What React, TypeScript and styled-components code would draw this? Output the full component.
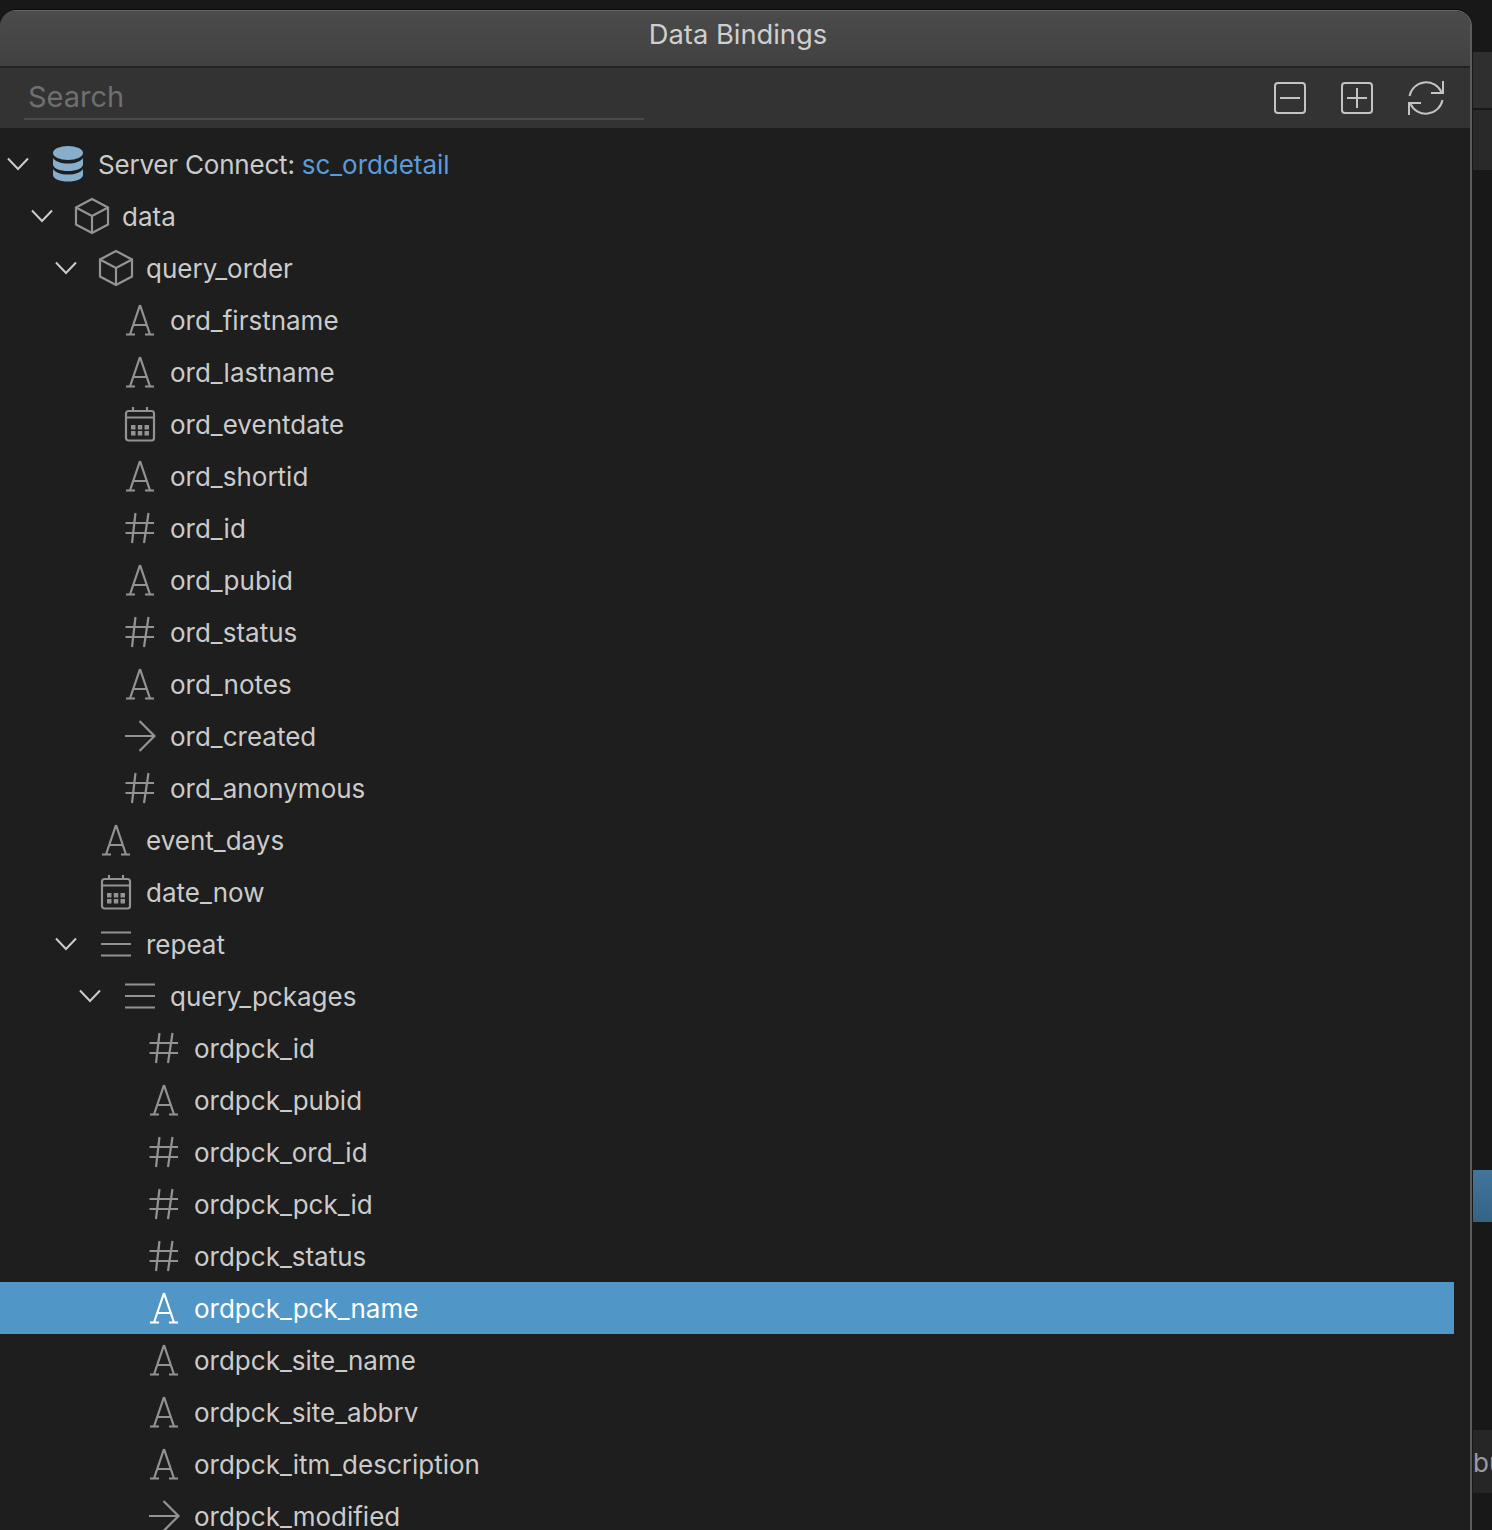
import React from 'react'
import styled, { createGlobalStyle } from 'styled-components'

type Kind = 'db' | 'box' | 'text' | 'date' | 'num' | 'arrow' | 'list'

type Row = {
  depth: number
  kind: Kind
  name: string
  open?: boolean
  link?: string
  selected?: boolean
}

const rows: Row[] = [
  { depth: 0, kind: 'db', name: 'Server Connect: ', link: 'sc_orddetail', open: true },
  { depth: 1, kind: 'box', name: 'data', open: true },
  { depth: 2, kind: 'box', name: 'query_order', open: true },
  { depth: 3, kind: 'text', name: 'ord_firstname' },
  { depth: 3, kind: 'text', name: 'ord_lastname' },
  { depth: 3, kind: 'date', name: 'ord_eventdate' },
  { depth: 3, kind: 'text', name: 'ord_shortid' },
  { depth: 3, kind: 'num', name: 'ord_id' },
  { depth: 3, kind: 'text', name: 'ord_pubid' },
  { depth: 3, kind: 'num', name: 'ord_status' },
  { depth: 3, kind: 'text', name: 'ord_notes' },
  { depth: 3, kind: 'arrow', name: 'ord_created' },
  { depth: 3, kind: 'num', name: 'ord_anonymous' },
  { depth: 2, kind: 'text', name: 'event_days' },
  { depth: 2, kind: 'date', name: 'date_now' },
  { depth: 2, kind: 'list', name: 'repeat', open: true },
  { depth: 3, kind: 'list', name: 'query_pckages', open: true },
  { depth: 4, kind: 'num', name: 'ordpck_id' },
  { depth: 4, kind: 'text', name: 'ordpck_pubid' },
  { depth: 4, kind: 'num', name: 'ordpck_ord_id' },
  { depth: 4, kind: 'num', name: 'ordpck_pck_id' },
  { depth: 4, kind: 'num', name: 'ordpck_status' },
  { depth: 4, kind: 'text', name: 'ordpck_pck_name', selected: true },
  { depth: 4, kind: 'text', name: 'ordpck_site_name' },
  { depth: 4, kind: 'text', name: 'ordpck_site_abbrv' },
  { depth: 4, kind: 'text', name: 'ordpck_itm_description' },
  { depth: 4, kind: 'arrow', name: 'ordpck_modified' },
]

const GlobalStyle = createGlobalStyle`
  html, body {
    margin: 0;
    height: 100%;
    background: #181818;
    font-family: Inter, "Liberation Sans", sans-serif;
  }
`

const Page = styled.div`
  display: flex;
  height: 100vh;
  overflow: hidden;
  background: #181818;
`

// The dialog, cut off by the bottom of the window
const Panel = styled.section`
  display: flex;
  flex-direction: column;
  flex: 0 0 1472px;
  box-sizing: border-box;
  margin-top: 10px;
  background: #1e1e1e;
  border-top: 1px solid #666;
  border-right: 2px solid #5c5c5c;
  border-top-left-radius: 16px;
  border-top-right-radius: 16px;
  box-shadow: 0 -1px 0 #0a0a0a;
  overflow: hidden;
`

const TitleBar = styled.header`
  height: 55px;
  box-sizing: content-box;
  padding: 0 0 0 6px;
  display: flex;
  align-items: flex-start;
  justify-content: center;
  flex: none;
  background: linear-gradient(#4b4b4b, #414141);
  border-bottom: 2px solid #232323;
  color: #cfcfcf;
  font-size: 27.3px;
  line-height: 48px;
`

const Toolbar = styled.div`
  height: 60px;
  flex: none;
  display: flex;
  align-items: center;
  justify-content: space-between;
  padding: 0 26px 0 24px;
  background: #333;
`

const SearchField = styled.div`
  align-self: flex-start;
  width: 620px;
  height: 42px;
  margin-top: 10px;
  padding-left: 4px;
  box-sizing: border-box;
  border-bottom: 2px solid #4a4a4a;
  color: #6f6f6f;
  font-size: 29px;
  line-height: 38px;
`

const ToolButtons = styled.div`
  display: flex;
  align-items: center;
  gap: 35px;
`

const ToolIcon = styled.svg`
  display: block;
  fill: none;
  stroke: #c4c4c4;
  stroke-width: 2;
`

const Tree = styled.ul`
  list-style: none;
  margin: 0 16px 0 0;
  padding: 10px 0 0;
`

const TreeRow = styled.li<{ $depth: number; $selected?: boolean }>`
  display: flex;
  align-items: center;
  height: 52px;
  padding-left: ${({ $depth }) => 4 + $depth * 24}px;
  background: ${({ $selected }) => ($selected ? '#5097c8' : 'transparent')};
  color: ${({ $selected }) => ($selected ? '#fff' : '#cbcbcb')};
  font-size: 26px;
`

const Caret = styled.span`
  flex: 0 0 48px;
  display: flex;
  align-items: center;
`

const IconSlot = styled.span`
  flex: 0 0 32px;
  height: 32px;
  margin-right: 14px;
`

const Glyph = styled.svg<{ $selected?: boolean }>`
  display: block;
  overflow: visible;
  fill: none;
  stroke: ${({ $selected }) => ($selected ? '#fff' : '#939393')};
  stroke-width: 2.2;
`

const Label = styled.span`
  position: relative;
  top: 0.5px;
`

const ServerName = styled.span`
  letter-spacing: -0.2px;
`

const Link = styled.span`
  color: #5b9bd8;
  letter-spacing: -0.05px;
`

// Sliver of the window that lies behind the dialog
const BackStrip = styled.aside`
  flex: 1;
  display: flex;
  flex-direction: column;
  padding-top: 52px;
  margin-left: 1px;
`

const BackTab = styled.div<{ $h: number; $bg: string; $after: number }>`
  flex: none;
  height: ${({ $h }) => $h}px;
  margin-bottom: ${({ $after }) => $after}px;
  background: ${({ $bg }) => $bg};
  color: #9a9a9a;
  font-size: 26px;
  line-height: 66px;
  overflow: hidden;
  white-space: nowrap;
`

const ChevronMark = styled.svg`
  margin-left: 2px;
  fill: none;
  stroke: #cbcbcb;
  stroke-width: 2;
`

function Chevron() {
  return (
    <ChevronMark width="24" height="14" viewBox="0 0 24 14">
      <polyline points="2,1.5 12,12 22,1.5" />
    </ChevronMark>
  )
}

const DbMark = styled.svg`
  display: block;
  overflow: visible;
  margin-top: -2px;
  fill: #87aecb;
`

function TypeIcon({ kind, selected }: { kind: Kind; selected?: boolean }) {
  if (kind === 'db') {
    return (
      <DbMark width="32" height="36" viewBox="0 0 32 36">
        <ellipse cx="16" cy="7" rx="15" ry="7" />
        <path d="M1 12c2 3.500 8 5.500 15 5.500S29 15.500 31 12v6.500c0 3.800-6.700 6.500-15 6.500S1 22.300 1 18.500z" />
        <path d="M1 23c2 3.500 8 5.500 15 5.500S29 26.500 31 23v6c0 3.800-6.700 6.500-15 6.500S1 32.800 1 29z" />
      </DbMark>
    )
  }
  return (
    <Glyph $selected={selected} width="32" height="32" viewBox="0 0 32 32">
      {kind === 'box' && (
        <path d="M16 -1L32 7.500V24.500L16 33L0 24.500V7.500ZM0 7.500L16 16L32 7.500M16 16V33" />
      )}
      {kind === 'text' && (
        <path d="M16 1L6 30.500M16 1L26 30.500M9.500 21H22.500M2 30.500H11M21 30.500H30" />
      )}
      {kind === 'num' && (
        <path d="M1.500 11H30M1.500 21H30M11.500 1L8 31M24.500 1L20 31" />
      )}
      {kind === 'arrow' && <path d="M1 16H30.500M15.500 1L30.500 16L15.500 31" />}
      {kind === 'list' && <path d="M1 4.500H31M1 16H31M1 27.500H31" />}
      {kind === 'date' && (
        <>
          <rect x="2" y="3" width="28" height="29.500" rx="2.500" />
          <path d="M2 9.500H30M9 -1V3M23 -1V3" />
          <path
            stroke="none"
            fill="#939393"
            d="M7 17h4.500v4.500h-4.500zM13.800 17h4.500v4.500h-4.500zM20.500 17h4.500v4.500h-4.500zM7 23h4.500v4.500h-4.500zM13.800 23h4.500v4.500h-4.500zM20.500 23h4.500v4.500h-4.500z"
          />
        </>
      )}
    </Glyph>
  )
}

export default function App() {
  return (
    <Page>
      <GlobalStyle />
      <Panel>
        <TitleBar>Data Bindings</TitleBar>
        <Toolbar>
          <SearchField>Search</SearchField>
          <ToolButtons>
            <ToolIcon width="32" height="32" viewBox="0 0 32 32">
              <rect x="1" y="1" width="30" height="30" rx="3" />
              <path d="M6 16H26" />
            </ToolIcon>
            <ToolIcon width="32" height="32" viewBox="0 0 32 32">
              <rect x="1" y="1" width="30" height="30" rx="3" />
              <path d="M6 16H26M16 6V26" />
            </ToolIcon>
            <ToolIcon width="36" height="36" viewBox="0 0 36 36">
              <path d="M1.500 16A17 17 0 0 1 33.500 12M35 1V13H23" />
              <path d="M34.500 20A17 17 0 0 1 2.500 24M1 35V23H13" />
            </ToolIcon>
          </ToolButtons>
        </Toolbar>
        <Tree>
          {rows.map(row => (
            <TreeRow key={row.name} $depth={row.depth} $selected={row.selected}>
              <Caret>{row.open && <Chevron />}</Caret>
              <IconSlot>
                <TypeIcon kind={row.kind} selected={row.selected} />
              </IconSlot>
              <Label>
                {row.link ? <ServerName>{row.name}</ServerName> : row.name}
                {row.link && <Link>{row.link}</Link>}
              </Label>
            </TreeRow>
          ))}
        </Tree>
      </Panel>
      <BackStrip>
        <BackTab $h={56} $bg="#2f2f2f" $after={2} />
        <BackTab $h={60} $bg="#292929" $after={1000} />
        <BackTab $h={52} $bg="linear-gradient(#42759b, #356386)" $after={208} />
        <BackTab $h={63} $bg="#262626" $after={0}>bu</BackTab>
      </BackStrip>
    </Page>
  )
}
